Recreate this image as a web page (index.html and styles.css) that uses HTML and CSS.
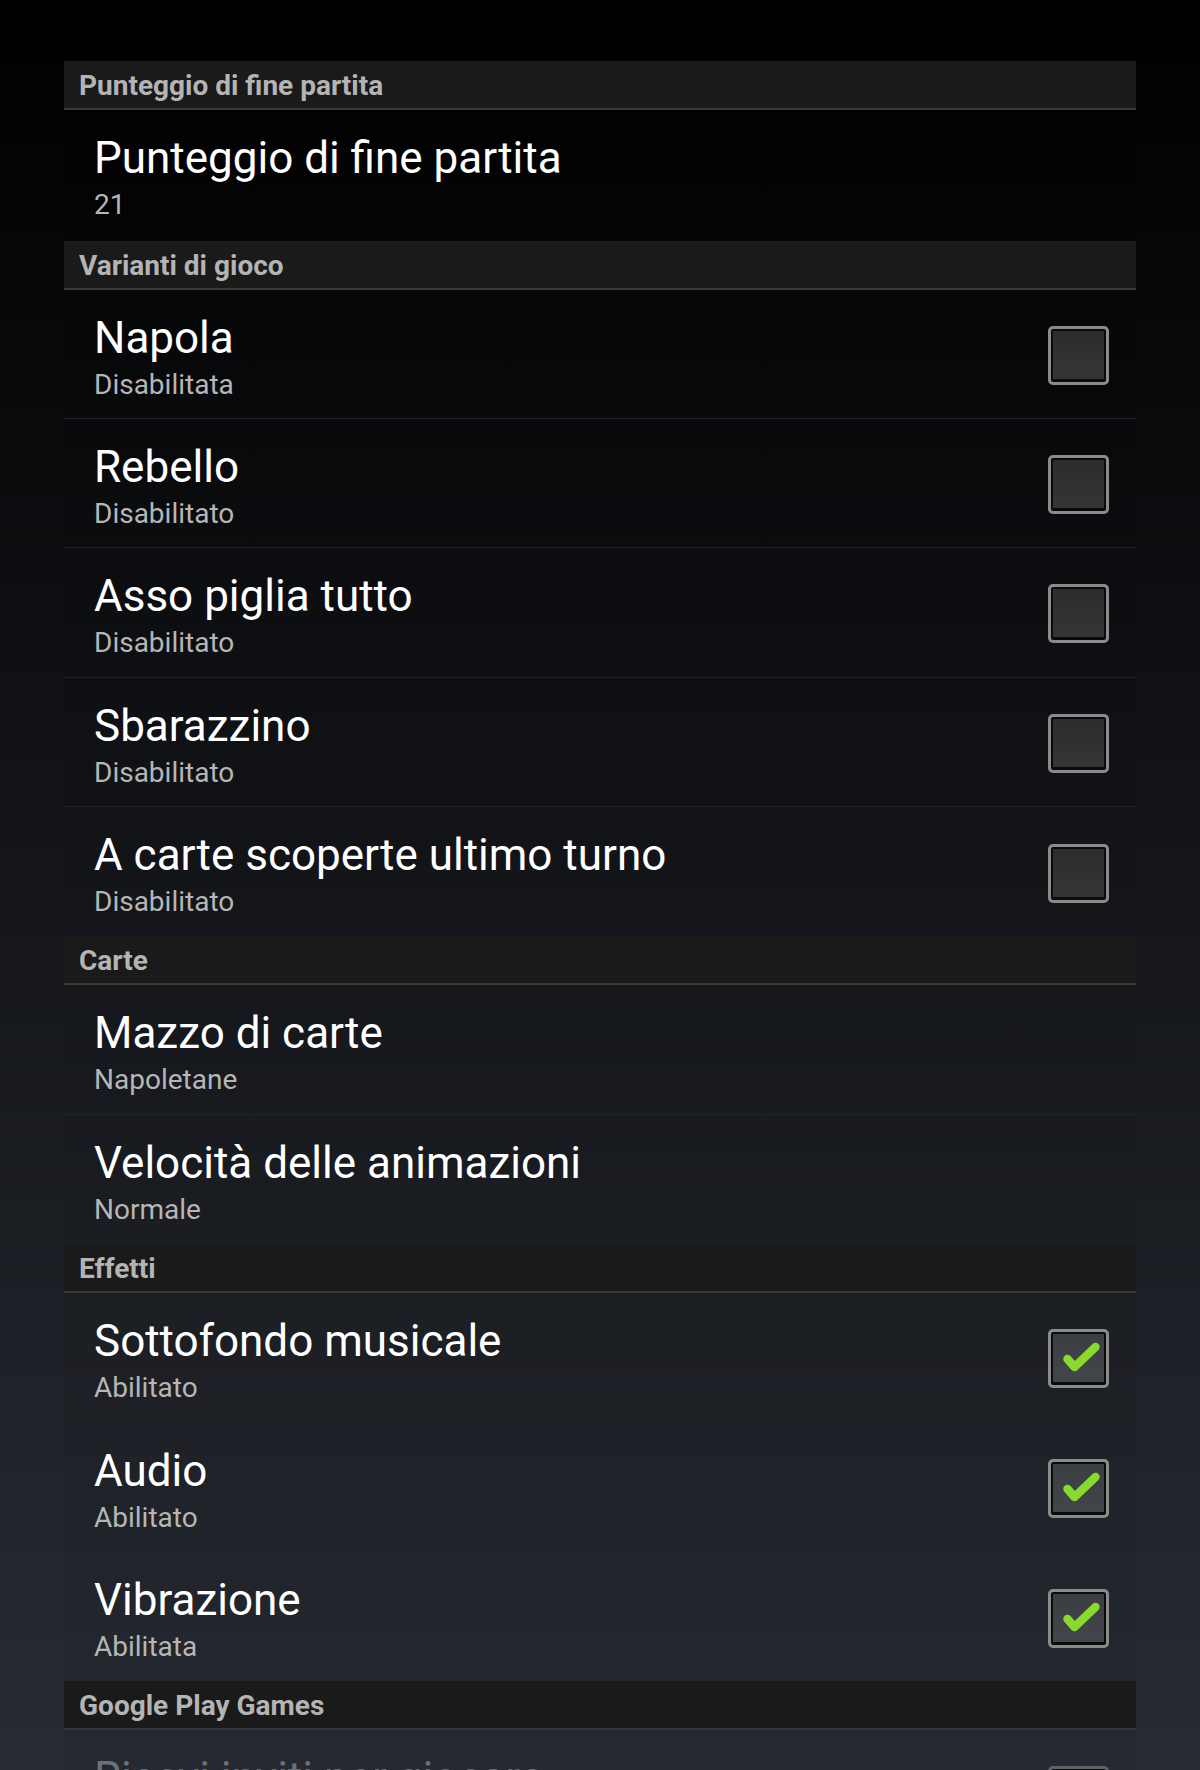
FILE: index.html
```html
<!doctype html>
<html lang="it">
    <head>
        <meta charset="utf-8">
        <title>Impostazioni</title>
        <meta name="viewport" content="width=device-width, initial-scale=1">
        <link rel="stylesheet" href="styles.css">
    </head>
    <body>
        <div class="prefs">
            <div class="category">Punteggio di fine partita</div>
            <div class="item last first">
                <div class="text">
                    <div class="title">Punteggio di fine partita</div>
                    <div class="summary">21</div>
                </div>
            </div>

            <div class="category">Varianti di gioco</div>
            <div class="item">
                <div class="text">
                    <div class="title">Napola</div>
                    <div class="summary">Disabilitata</div>
                </div>
                <div class="check"></div>
            </div>
            <div class="item">
                <div class="text">
                    <div class="title">Rebello</div>
                    <div class="summary">Disabilitato</div>
                </div>
                <div class="check"></div>
            </div>
            <div class="item">
                <div class="text">
                    <div class="title">Asso piglia tutto</div>
                    <div class="summary">Disabilitato</div>
                </div>
                <div class="check"></div>
            </div>
            <div class="item">
                <div class="text">
                    <div class="title">Sbarazzino</div>
                    <div class="summary">Disabilitato</div>
                </div>
                <div class="check"></div>
            </div>
            <div class="item last">
                <div class="text">
                    <div class="title">A carte scoperte ultimo turno</div>
                    <div class="summary">Disabilitato</div>
                </div>
                <div class="check"></div>
            </div>

            <div class="category">Carte</div>
            <div class="item">
                <div class="text">
                    <div class="title">Mazzo di carte</div>
                    <div class="summary">Napoletane</div>
                </div>
            </div>
            <div class="item last">
                <div class="text">
                    <div class="title">Velocità delle animazioni</div>
                    <div class="summary">Normale</div>
                </div>
            </div>

            <div class="category">Effetti</div>
            <div class="item">
                <div class="text">
                    <div class="title">Sottofondo musicale</div>
                    <div class="summary">Abilitato</div>
                </div>
                <div class="check on">
                    <svg viewBox="0 0 54 53"><polyline points="16,27 23,35 44,15" /></svg>
                </div>
            </div>
            <div class="item">
                <div class="text">
                    <div class="title">Audio</div>
                    <div class="summary">Abilitato</div>
                </div>
                <div class="check on">
                    <svg viewBox="0 0 54 53"><polyline points="16,27 23,35 44,15" /></svg>
                </div>
            </div>
            <div class="item last">
                <div class="text">
                    <div class="title">Vibrazione</div>
                    <div class="summary">Abilitata</div>
                </div>
                <div class="check on">
                    <svg viewBox="0 0 54 53"><polyline points="16,27 23,35 44,15" /></svg>
                </div>
            </div>

            <div class="category">Google Play Games</div>
            <div class="item disabled">
                <div class="text">
                    <div class="title">Ricevi inviti per giocare</div>
                </div>
                <div class="check"></div>
            </div>
        </div>
    </body>
</html>
```

FILE: styles.css
```css
html, body {
    margin: 0;
    height: 100%;
}

body {
    width: 1200px;
    height: 1770px;
    overflow: hidden;
    background: linear-gradient(#000 0, #050506 200px, #272b33 1770px);
    font-family: Roboto, "Noto Sans", sans-serif;
}

.prefs {
    margin: 61px 64px 0;
    background: rgba(0, 0, 0, 0.03);
}

.category {
    height: 45px;
    line-height: 45px;
    padding: 2px 0 0 15px;
    background: #1a1a1a;
    border-bottom: 2px solid #383838;
    color: #b4b4b4;
    font-size: 28px;
    font-weight: bold;
}

.item {
    box-sizing: border-box;
    height: 129.4px;
    display: flex;
    align-items: flex-start;
    padding: 22px 27px 13.4px 30px;
    border-bottom: 1px solid #202226;
}

.item.first {
    height: 130.5px;
}

.item.last {
    border-bottom: none;
}

.text {
    flex: 1;
}

.title {
    color: #fff;
    font-size: 44px;
    line-height: 52px;
}

.summary {
    color: #b6b6b6;
    font-size: 28px;
    line-height: 42px;
}

.check {
    box-sizing: border-box;
    align-self: center;
    margin-top: -6px;
    width: 61px;
    height: 59px;
    border: 3px solid #8b8b8b;
    border-radius: 5px;
    box-shadow: inset 0 0 0 2px #0b0b0b, inset 0 -3px 0 #0b0b0b;
    background: linear-gradient(#2b2c2c, #353636);
}

.check.on {
    background: linear-gradient(#3a3d41, #43474c);
}

.check svg {
    display: block;
    width: 100%;
    height: 100%;
}

.check polyline {
    fill: none;
    stroke: #8ad92e;
    stroke-width: 8.5;
    stroke-linejoin: round;
    stroke-linecap: round;
}

.disabled .title {
    color: #6c7077;
}

.disabled .check {
    border-color: #5d6168;
    background: #23272d;
}
```
